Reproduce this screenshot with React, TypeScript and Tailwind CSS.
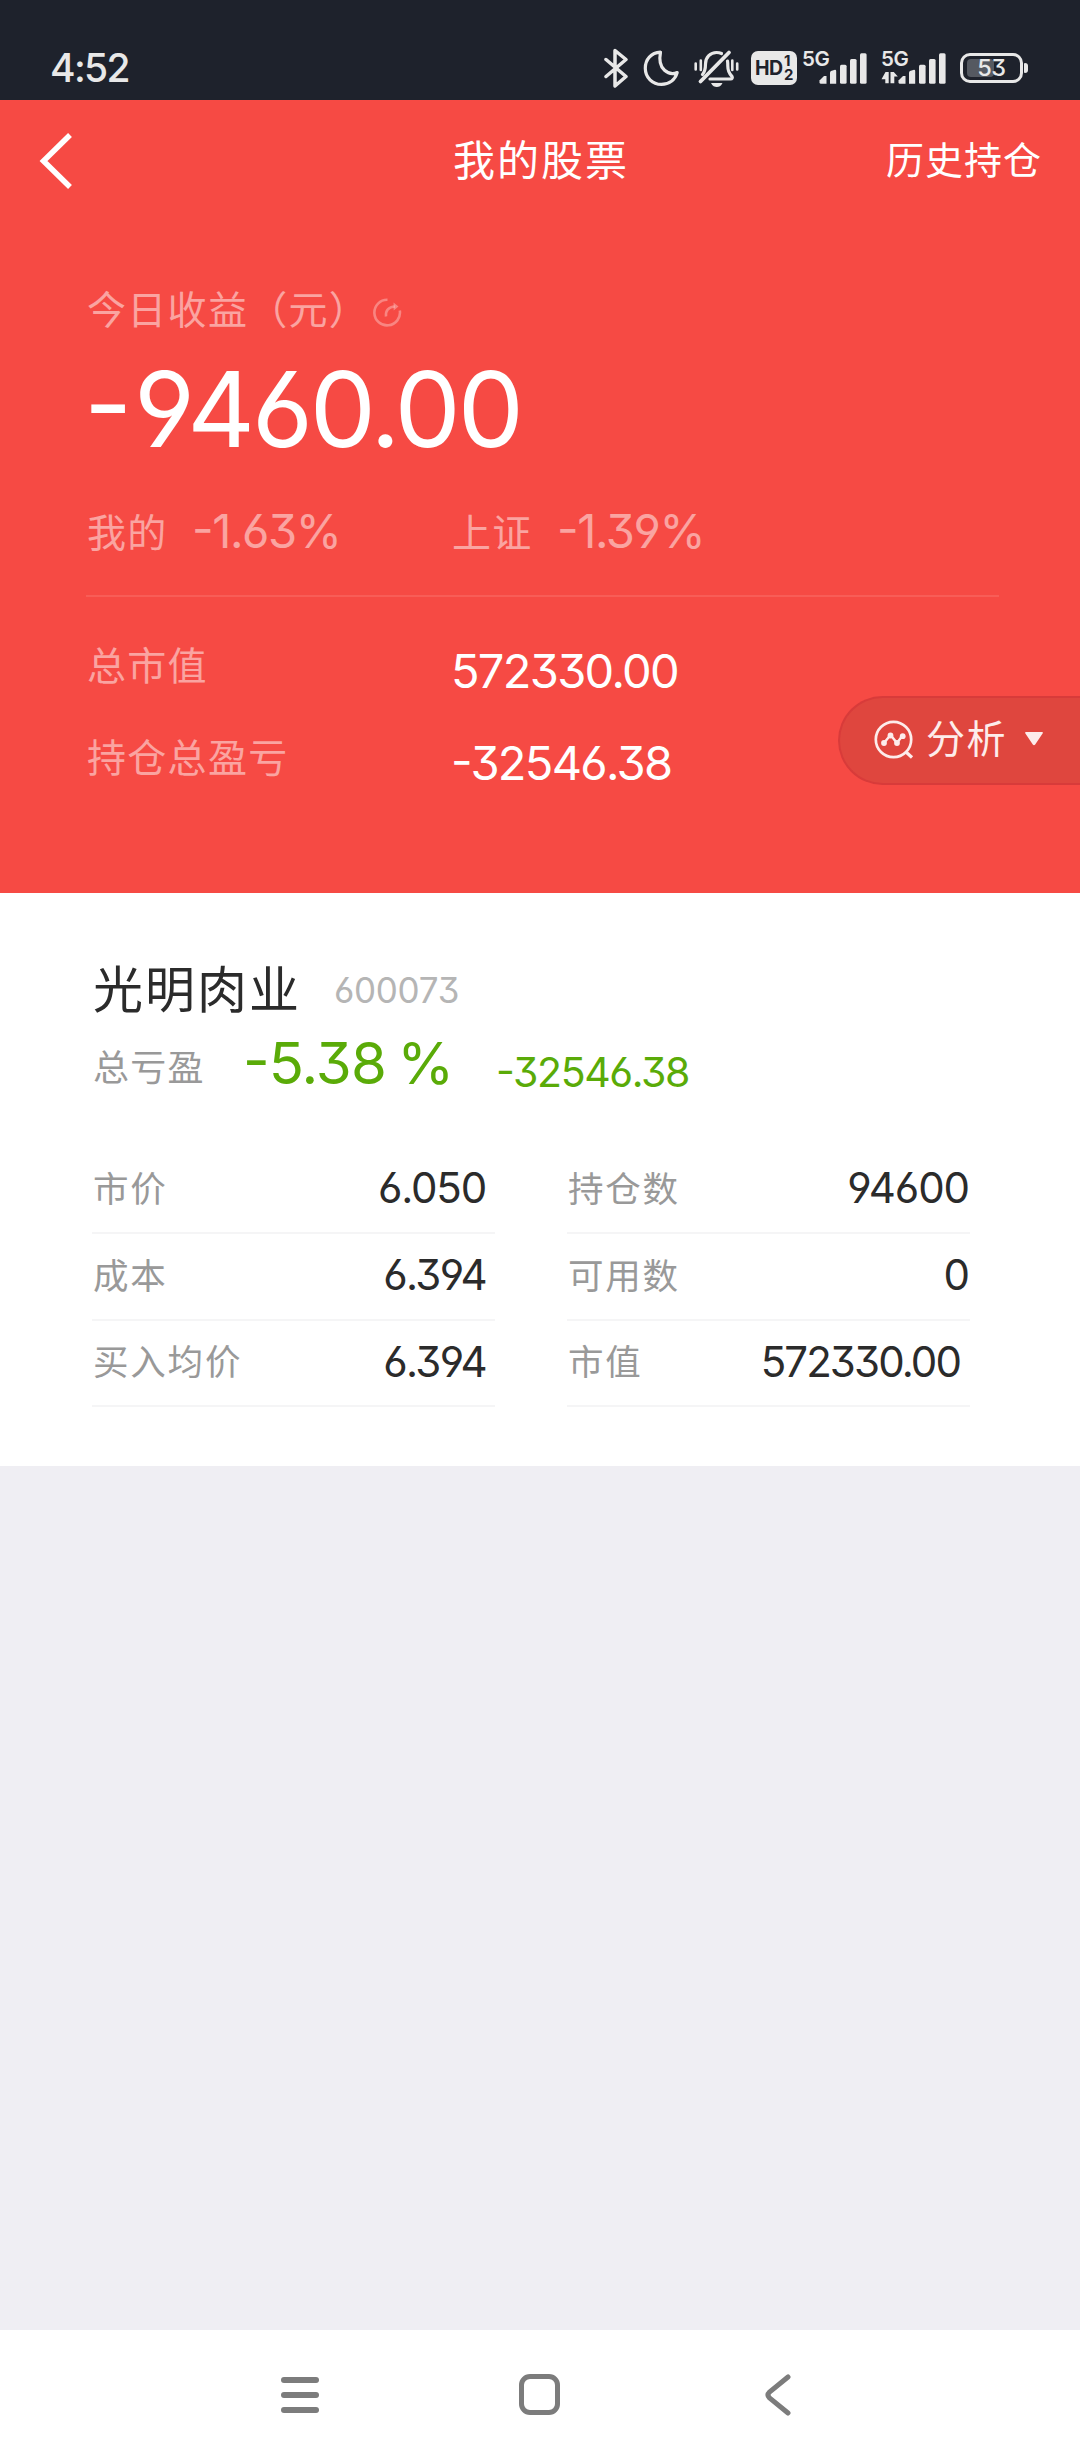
import { cva } from 'class-variance-authority';
import clsx from 'clsx';

const summary = [
  { label: '总市值', value: '572330.00', tracking: 'tracking-[-1.7px]' },
  { label: '持仓总盈亏', value: '-32546.38', tracking: 'tracking-[-1.7px]' },
];

const leftRows = [
  { label: '市价', value: '6.050', pos: 'pr-[9px] tracking-[-1.2px]' },
  { label: '成本', value: '6.394', pos: 'pr-[9px] tracking-[-1.7px]' },
  { label: '买入均价', value: '6.394', pos: 'pr-[9px] tracking-[-1.7px]' },
];

const rightRows = [
  { label: '持仓数', value: '94600', pos: 'pr-[1px] tracking-[-1.1px]' },
  { label: '可用数', value: '0', pos: 'pr-[1px] tracking-[-1px]' },
  { label: '市值', value: '572330.00', pos: 'pr-[10px] tracking-[-1.9px]' },
];

const num = cva(
  'whitespace-nowrap font-[Inter,sans-serif] [font-feature-settings:"case","cv03","cv04","cv09","calt"_0]'
);

const SignalBars = ({ data }: { data?: boolean }) => (
  <svg width="66" height="36" viewBox="0 0 66 36" fill="#e8e8e8">
    <path d="M17.5 30.5l4.5-4.5h2.5v7.8h-5.5q-1.5 0-1.5-1.5z" />
    <path d="M28 22.5q0-1 1-1.5l4-1.2q1.2 0 1.2 1.2v12.8H28z" />
    <rect x="38" y="14.8" width="6.6" height="19" rx="1.5" />
    <rect x="48" y="9" width="6.6" height="24.8" rx="1.5" />
    <rect x="58" y="3.3" width="6.6" height="30.5" rx="1.5" />
    {data && <path d="M4.5 22h3.2v11.3H4.3v-4L.5 29.3zM9.5 22h3.3l4 4.5h-3.5v6.8H9.5z" />}
  </svg>
);

const Network = ({ data }: { data?: boolean }) => (
  <div className="relative h-[36px] w-[66px]">
    <SignalBars data={data} />
    <span className="absolute left-0 top-[-3px] font-[Inter,sans-serif] text-[20.5px] font-semibold leading-6 tracking-[-0.4px] text-[#e8e8e8]">
      5G
    </span>
  </div>
);

const StatusBar = () => (
  <div className="flex h-[100px] items-start bg-[#1e222c] pl-[50px] pt-[48px]">
    <span className="h-10 w-[554px] font-[Inter,sans-serif] text-[39px] font-medium leading-10 tracking-[-1.7px] text-[#e8e8e8]">
      4:52
    </span>
    <svg width="26" height="40" viewBox="0 0 26 40" fill="none" stroke="#e8e8e8" strokeWidth="3.5" strokeLinejoin="round" strokeLinecap="round">
      <path d="M2 11.5l20 17-11 9.5V2.5l11 9-20 17" />
    </svg>
    <svg className="ml-[12px]" width="40" height="40" viewBox="0 0 40 40" fill="none" stroke="#e8e8e8" strokeWidth="3.2" strokeLinejoin="round">
      <path d="M18.5 4.2C9 4.8 3.3 11.5 3.3 20.2 3.3 29.5 10.5 36.4 19.5 36.4c7.5 0 13.5-4.3 15.7-11.9-8 3.3-20.2-2.5-16.7-20.3z" />
    </svg>
    <svg className="ml-[12px]" width="45" height="40" viewBox="0 0 45 40" fill="none" stroke="#e8e8e8" strokeWidth="3.2" strokeLinecap="round" strokeLinejoin="round">
      <path d="M6.5 33.5L35 4.5" strokeWidth="3.8" />
      <path d="M8.5 26.5c2.5-3 3-5 3-10.5 0-7 5-11.5 11-11.5 2 0 3.5.3 5 1" />
      <path d="M33.5 13c.3 1.5.3 3 .3 5 0 5 1.2 7.5 4.2 10.5.8 1.2 0 2.5-1.3 2.5H16" />
      <path d="M1.7 15.5v6M6.8 12.5v9.5M38.3 12.5v9.5M43.2 15.5v6" strokeWidth="2.6" />
      <path d="M17 35h11.5c-1.5 3-3.5 4-5.7 4s-4.3-1-5.8-4z" fill="#e8e8e8" stroke="none" />
    </svg>
    <div className="ml-[12px] mt-[3px] flex h-[34px] w-[46px] items-center rounded-[7px] bg-[#e8e8e8] pl-[4px] text-[#1e222c]">
      <span className="w-[29px] font-[Inter,sans-serif] text-[19.5px] font-bold leading-[34px] tracking-[-0.6px]">HD</span>
      <span className="flex flex-col font-[Inter,sans-serif] text-[15px] font-bold leading-[14.5px]">
        <span>1</span>
        <span>2</span>
      </span>
    </div>
    <div className="ml-[5px] flex gap-[13px] pt-[2px]">
      <Network />
      <Network data />
    </div>
    <div className="relative ml-[13px] mt-[5px] flex h-[30px] w-[63px] items-center rounded-[10px] border-[3px] border-[#e8e8e8] p-[4px]">
      <div className="h-[18px] w-[27px] rounded-[4px] bg-[#555961]" />
      <span className="absolute inset-0 text-center font-[Inter,sans-serif] text-[23.5px] font-medium leading-6 tracking-[-0.5px] text-[#e8e8e8] [font-feature-settings:'cv09']">
        53
      </span>
    </div>
    <div className="ml-[1px] mt-[15px] h-[10px] w-[4px] rounded-r-[3px] rounded-l-[1px] bg-[#e8e8e8]" />
  </div>
);

const AnalysisButton = () => (
  <button className="absolute right-0 top-[596px] flex h-[89px] w-[242px] items-center rounded-l-full border-y-2 border-l-2 border-[#d83b3a] bg-[#df463e] pb-[2px] pl-[34px] text-[#fdeceb]">
    <svg width="40" height="40" viewBox="0 0 40 40" fill="none" stroke="currentColor" strokeWidth="2.7">
      <circle cx="19.5" cy="19.5" r="17.7" />
      <path d="M32 32l6 5.5" strokeWidth="3.2" />
      <path d="M10 23l6.5-8 6.5 8 5.5-7.5" strokeWidth="2.4" />
      <g fill="currentColor" stroke="none">
        <circle cx="10" cy="23" r="2.9" />
        <circle cx="16.5" cy="15.5" r="2.9" />
        <circle cx="23" cy="23" r="2.9" />
        <circle cx="28.7" cy="16.2" r="2.9" />
      </g>
    </svg>
    <span className="ml-[12px] w-[81px] whitespace-nowrap pb-[7px] text-[39px] leading-[60px] tracking-[1.5px]">分析</span>
    <svg className="mb-[2px] ml-[18px]" width="18" height="14" viewBox="0 0 18 14" fill="currentColor">
      <path d="M1 0h16q1.5.3.6 1.5l-7.4 11q-1.2 1.3-2.4 0L.4 1.5Q-.5.3 1 0z" />
    </svg>
  </button>
);

const DetailColumn = ({ rows }: { rows: typeof leftRows }) => (
  <div className="w-[403px]">
    {rows.map((row, i) => (
      <div
        key={row.label}
        className={clsx('flex items-center justify-between border-b-2 border-[#f5f5f6]', i === 2 ? 'h-[86px]' : 'h-[87px]')}
      >
        <span className="whitespace-nowrap pb-[6px] pl-[1px] text-[35.5px] leading-[60px] tracking-[1.8px] text-[#999]">
          {row.label}
        </span>
        <span className={clsx(num(), row.pos, 'pb-[3px] text-[42px] leading-[60px] text-[#2b2b2b]')}>{row.value}</span>
      </div>
    ))}
  </div>
);

export default function App() {
  return (
    <div className="flex h-[2460px] w-[1080px] flex-col overflow-hidden bg-[#efeef3] font-['Noto_Sans_CJK_SC',sans-serif]">
      <StatusBar />

      {/* Header and summary */}
      <section className="relative h-[793px] bg-[#f64a44] text-white">
        <header className="grid h-[116px] grid-cols-[1fr_auto_1fr] items-center">
          <svg className="ml-[39px] mt-[5px]" width="35" height="56" viewBox="0 0 35 56" fill="none" stroke="currentColor" strokeWidth="5.5">
            <path d="M31 2L4.5 28 31 54" />
          </svg>
          <h1 className="whitespace-nowrap pl-[2px] text-[42px] leading-[60px] tracking-[2px]">我的股票</h1>
          <span className="justify-self-end whitespace-nowrap pr-[38px] text-[38px] leading-[60px] tracking-[1px]">
            历史持仓
          </span>
        </header>

        <div className="pl-[86px] pr-[81px] pt-[61px]">
          <div className="flex items-center text-white/50">
            <span className="w-[286px] whitespace-nowrap pl-[1px] text-[39px] leading-[60px] tracking-[1.3px]">今日收益（元）</span>
            <svg className="mt-[12px]" width="30" height="30" viewBox="0 0 30 30" fill="none" stroke="currentColor" strokeWidth="2.6" opacity="0.65">
              <path d="M15.5 1.8A12.8 12.8 0 1 0 27.8 12.5" />
              <path d="M14 18.5c-.6-6 2.5-9.500 9-10" />
              <path d="M21.5 4.5l5 4-4.8 4z" fill="currentColor" stroke="none" />
            </svg>
          </div>
          <div className={clsx(num(), '-ml-[2px] mt-5 text-[105px] font-[370] leading-[104px] tracking-[-3.2px]')}>
            <span className="mr-[5px]">-</span>9460.00
          </div>

          <div className="mt-10 flex h-[60px] items-center text-white/50">
            <span className="w-[106px] pb-[3px] pl-[1px] text-[39px] leading-[60px] tracking-[1.2px]">我的</span>
            <span className={clsx(num(), 'w-[260px] text-[47px] leading-[60px] tracking-[-1.4px]')}>-1.63%</span>
            <span className="w-[105px] pb-[3px] text-[39px] leading-[60px] tracking-[1.2px]">上证</span>
            <span className={clsx(num(), 'text-[47px] leading-[60px] tracking-[-1.4px]')}>-1.39%</span>
          </div>

          <div className="mt-[34px] h-[2px] bg-[#f85d57]" />

          <div className="flex">
            <div className="flex w-[365px] flex-col gap-8 pl-[1px] pt-9">
              {summary.map((item) => (
                <span key={item.label} className="text-[39px] leading-[60px] tracking-[1.3px] text-white/50">
                  {item.label}
                </span>
              ))}
            </div>
            <div className="flex flex-col gap-8 pt-11">
              {summary.map((item) => (
                <span key={item.label} className={clsx(num(), item.tracking, 'text-[47px] leading-[60px]')}>
                  {item.value}
                </span>
              ))}
            </div>
          </div>
        </div>

        <AnalysisButton />
      </section>

      {/* Holding card */}
      <section className="h-[573px] bg-white px-[92px] pt-[63px]">
        <div className="flex h-[60px] items-center">
          <h2 className="w-[242px] whitespace-nowrap pl-[1px] text-[50px] leading-[60px] tracking-[2px] text-[#2b2b2b]">光明肉业</h2>
          <span className={clsx(num(), 'mt-[8px] text-[35px] leading-[60px] tracking-[-0.3px] text-[#b5b5b5]')}>600073</span>
        </div>
        <div className="mt-[17px] flex h-[60px] items-center text-[#5aab08]">
          <span className="mt-[4px] w-[151px] whitespace-nowrap pl-[1px] text-[36px] leading-[56px] tracking-[1.3px] text-[#999]">总亏盈</span>
          <span className={clsx(num(), 'w-[253px] text-[58px] leading-[60px] tracking-[-0.9px] [word-spacing:-4px]')}>-5.38 %</span>
          <span className={clsx(num(), 'mt-[18px] text-[41px] leading-[42px] tracking-[-1.4px]')}>-32546.38</span>
        </div>
        <div className="mt-[54px] flex gap-[72px]">
          <DetailColumn rows={leftRows} />
          <DetailColumn rows={rightRows} />
        </div>
      </section>

      {/* System navigation */}
      <nav className="mt-auto flex h-[130px] items-start bg-white pl-[281px] pt-[44px] text-[#7c7c7c]">
        <div className="flex w-[38px] flex-col gap-[9px] pt-[3px]">
          <div className="h-[6px] rounded-full bg-current" />
          <div className="h-[6px] rounded-full bg-current" />
          <div className="h-[6px] rounded-full bg-current" />
        </div>
        <div className="ml-[200px] h-[41px] w-[41px] rounded-[11px] border-[5px] border-current" />
        <svg className="ml-[204px]" width="28" height="42" viewBox="0 0 28 42" fill="none" stroke="currentColor" strokeWidth="5" strokeLinecap="round">
          <path d="M24 3L5.5 18q-3 3 0 6L24 39" />
        </svg>
      </nav>
    </div>
  );
}
